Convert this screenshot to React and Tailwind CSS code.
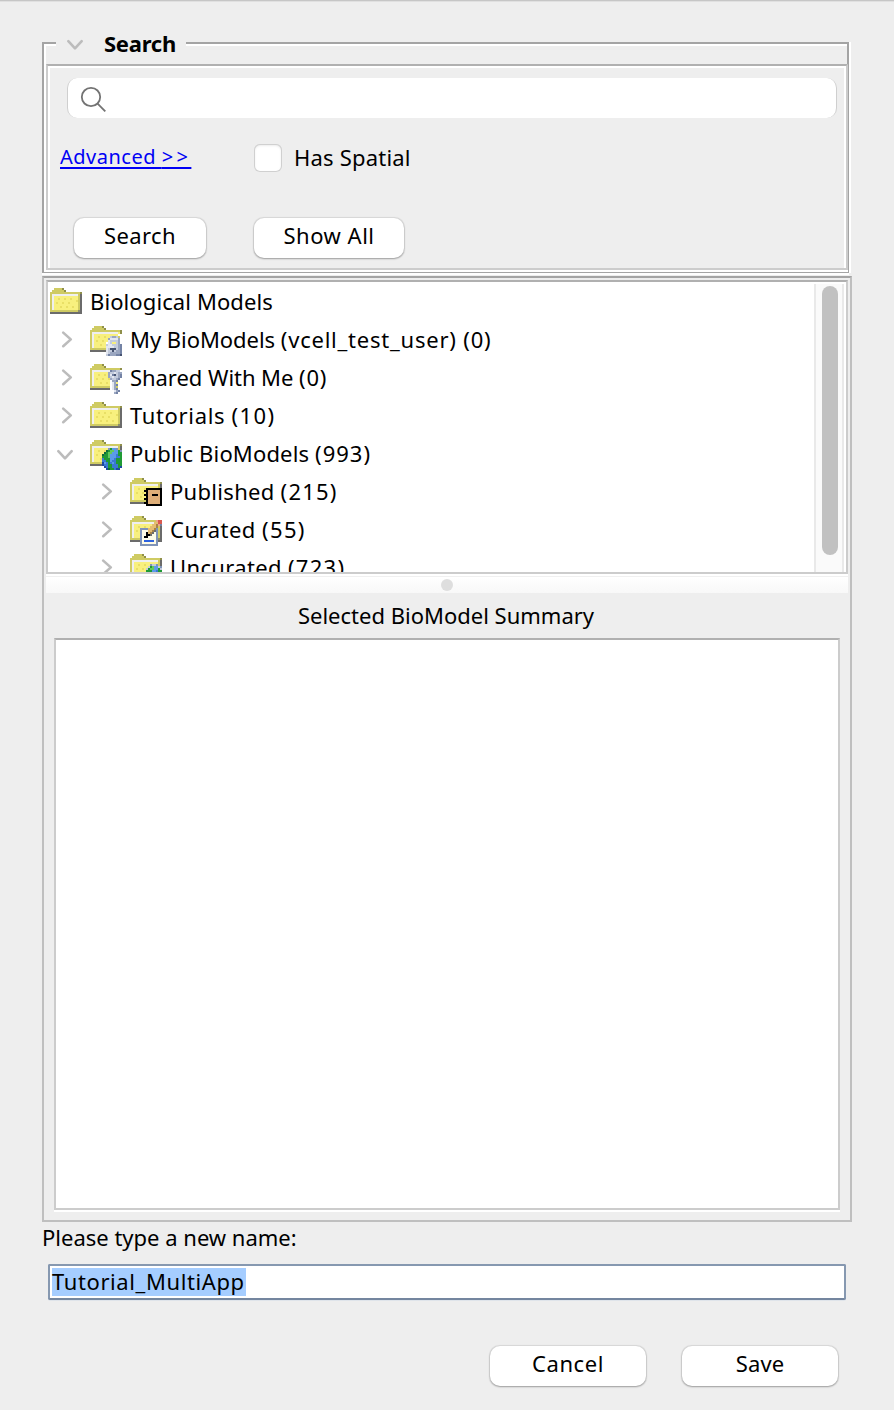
import React from "react";

const PALETTE = {
  o: "#cfcb63", d: "#8f8f4a", y: "#f8f07e", s: "#e9df66", h: "#efefef", g: "#6b6b6b", c: "#8d8d6e",
  a: "#c3cbdc", b: "#9aa6c0", e: "#7483a5", f: "#e3e7f0", n: "#465371", k: "#000000",
  t: "#deae78", w: "#ffffff", u: "#5b9be8", v: "#3a78d4", x: "#1d4aa0", G: "#1f9a35", H: "#62c95c", D: "#0d6b3c",
  B: "#2c62e0", p: "#7f93b8", r: "#d9594f", q: "#f0a090", m: "#e5bd72", l: "#a88346", i: "#fdfbe6",
};

const FOLDER = [
  "................",
  "..ooood.........",
  ".ooooood........",
  "oooooooooooooood",
  "ohhhhhhhhhhhhhog",
  "ohyyyyyyyyyyyyog",
  "ohyysyysyysyyyog",
  "ohyyyyyyyyyyysog",
  "ohysyysyysyyyyog",
  "ohyyyyyyyyyyyyog",
  "ohyyysyysyysyyog",
  "ohyyyyyyyyyyyyog",
  "oooooooooooooocg",
  "gggggggggggggggg",
  "................",
  "................",
];

const LOCK = [
  "", "", "", "",
  "              yd",
  "              ww",
  "          abba w",
  "         bffffbw",
  "         faaaabw",
  "        wfayyabw",
  "        affaaabe",
  "        ffffaabe",
  "        fannnabe",
  "        faanabbe",
  "        fabbbbbe",
  "        aebbbeen",
];

const KEY = [
  "", "", "",
  "              od",
  "          ebbaaw",
  "         baafabb",
  "         bfenabe",
  "         bafaabe",
  "          baabew",
  "          wbbeww",
  "          wfb www",
  "          wfbeww",
  "          wfb www",
  "          wfbeww",
  "            fbe",
  "            be",
];

const GLOBE = [
  "", "", "", "", "",
  "         pGuup",
  "        DGHHuuGp",
  "       DGHHuuuGG",
  "      DGGHuuuvGGD",
  "      GGGHuuuvvGG",
  "      vGGGuuvGGGG",
  "      vvGGuvvGGGD",
  "      xuvGvuvGGGD",
  "      xvvGGvvvGGx",
  "       xvGGvvvGx",
  "        xDGGvxx",
];

const NOTEBOOK = [
  "", "", "", "", "", "",
  "        kkkkkkkk",
  "       kkttttttk",
  "        kttttttk",
  "       kkttkkktk",
  "        kttttttk",
  "       kkttttttk",
  "        kttttttk",
  "       kkttttttk",
  "        kkkkkkkk",
  "",
];

const NOTE = [
  "", "", "",
  "             qrr",
  "            mmrr",
  "           mmlqe",
  "          mmmlog",
  "     ppppmmmlpog",
  "     piiimmlgpog",
  "     piikmlgipog",
  "     piikkgiipog",
  "     pikkiiiipog",
  "     piiiiiiipcg",
  "     piBBBBBipgg",
  "     piiiiiiip",
  "     ppppppppp",
];

const SMALL_GLOBE = [
  "", "", "", "", "", "",
  "          paap",
  "         aGHuuap",
  "        aGHHuuGa",
  "        GGGuuvGG",
  "        GGuuvvGG",
  "        vGGuvGGD",
  "        xvGGvvGx",
  "         xvGvvx",
  "          xxxx", "",
];

function FolderIcon({ overlay }) {
  const cells = [];
  for (let y = 0; y < 16; y++) {
    for (let x = 0; x < 16; x++) {
      const top = overlay && overlay[y] && overlay[y][x];
      const ch = top && top !== " " ? top : FOLDER[y][x];
      if (PALETTE[ch]) cells.push(<rect key={x + "-" + y} x={x} y={y} width="1" height="1" fill={PALETTE[ch]} />);
    }
  }
  return (
    <svg className="h-8 w-8 shrink-0" viewBox="0 0 16 16" shapeRendering="crispEdges">
      {cells}
    </svg>
  );
}

function Chevron({ open }) {
  return (
    <svg className="h-5 w-5 shrink-0 overflow-visible" viewBox="0 0 20 20" fill="none" stroke="#bcbcbc" strokeWidth="2.6" strokeLinecap="round" strokeLinejoin="round">
      <path d={open ? "M0.3 7.2 L7 14.4 L13.7 7.2" : "M5.2 2.6 L12.8 9.4 L5.2 16.2"} />
    </svg>
  );
}

const ROWS = [
  { label: "Biological Models", pad: "pl-0.5", track: "tracking-[0.1px]", root: true },
  { label: "My BioModels ", detail: "(vcell_test_user) (0)", pad: "pl-2.5", track: "tracking-[-0.04px]", detailTrack: "tracking-[0.78px]", overlay: LOCK },
  { label: "Shared With Me ", detail: "(0)", pad: "pl-2.5", track: "tracking-[-0.05px]", detailTrack: "tracking-[0.8px]", overlay: KEY },
  { label: "Tutorials ", detail: "(10)", pad: "pl-2.5", track: "tracking-[0.65px]", detailTrack: "tracking-[1.4px]" },
  { label: "Public BioModels ", detail: "(993)", pad: "pl-2.5", track: "tracking-[0.15px]", detailTrack: "tracking-[1px]", overlay: GLOBE, open: true },
  { label: "Published ", detail: "(215)", pad: "pl-[50px]", track: "tracking-[0.3px]", detailTrack: "tracking-[1.2px]", overlay: NOTEBOOK },
  { label: "Curated ", detail: "(55)", pad: "pl-[50px]", track: "tracking-[0.5px]", detailTrack: "tracking-[1.3px]", overlay: NOTE },
  { label: "Uncurated ", detail: "(723)", pad: "pl-[50px]", track: "tracking-[0.35px]", detailTrack: "tracking-[1.3px]", overlay: SMALL_GLOBE },
];

function TreeRow({ row }) {
  return (
    <div className={"flex h-[38px] shrink-0 items-center " + row.pad}>
      {!row.root && <div className="w-8"><Chevron open={row.open} /></div>}
      <FolderIcon overlay={row.overlay} />
      <span className={"ml-2 pb-0.5 whitespace-pre " + row.track}>
        {row.label}
        {row.detail && <span className={row.detailTrack}>{row.detail}</span>}
      </span>
    </div>
  );
}

function Button({ children, className }) {
  return (
    <button className={"flex h-10 items-center justify-center rounded-[10px] bg-white pb-1.5 shadow-[0_0_1px_0.5px_rgba(0,0,0,0.09),0_1px_2px_rgba(0,0,0,0.28)] " + className}>
      {children}
    </button>
  );
}

export default function App() {
  return (
    <div className="flex h-[1410px] w-[894px] flex-col border-t border-[#c6c6c6] bg-[#eeeeee] pr-[42px] pl-[42px] font-['Noto_Sans',sans-serif] text-[22px] leading-[30px] text-black shadow-[inset_0_1px_0_#e0e0e0]">
      {/* Collapsible search group */}
      <section className="mt-[29px] flex h-[245px] w-[809px] flex-col">
        <div className="flex h-[34px] shrink-0 items-start">
          <div className="mt-3 h-[22px] w-3.5 border-t-2 border-l-2 border-[#a4a4a4] shadow-[inset_2px_2px_0_#fff]" />
          <div className="flex h-[34px] w-[130px] items-start pl-3">
            <div className="mt-1"><Chevron open /></div>
            <span className="ml-4 text-[22px] leading-[26px] font-bold tracking-[-0.25px]">Search</span>
          </div>
          <div className="mt-3 h-[22px] w-[663px] border-t-2 border-r-2 border-[#a4a4a4] shadow-[inset_0_2px_0_#fff,2px_0_0_#fff]" />
        </div>
        <div className="flex h-[209px] w-[807px] border-b border-l-2 border-r border-[#a4a4a4] pl-0.5 shadow-[inset_2px_0_0_#fff,inset_0_-2px_0_#fff,2px_0_0_#fff,0_2px_0_#fff]">
          <div className="h-[206px] w-[802px] border-2 border-[#cccccc] border-t-[#b0b0b0] shadow-[inset_2px_2px_0_#fff,inset_-2px_0_0_#fff]">
            <div className="mt-3 ml-[19px] flex h-10 w-[770px] items-center rounded-[10px] border-x border-[#cfcfcf] bg-white pl-3">
              <svg className="h-7 w-7" viewBox="0 0 28 28" fill="none" stroke="#737373" strokeWidth="1.8">
                <circle cx="11" cy="13" r="9.2" />
                <path d="M17.6 19.7 L25.3 27.4" />
              </svg>
            </div>
            <div className="mt-[26px] flex h-7 items-center pl-3">
              <div className="w-[194px] pb-0.5 text-[20px]">
                <a className="tracking-[0.5px] text-[#0000f5] underline decoration-2 underline-offset-[3px]">Advanced <span className="tracking-[3.4px]">&gt;&gt;</span></a>
              </div>
              <span className="h-7 w-7 rounded-[6px] bg-white shadow-[inset_0_0_0_1px_#d0d0d0,inset_0_1px_3px_rgba(0,0,0,0.15)]" />
              <span className="ml-3 pb-0.5 tracking-[0.2px]">Has Spatial</span>
            </div>
            <div className="mt-[46px] flex pl-[26px]">
              <Button className="w-[132px] tracking-[0.4px]">Search</Button>
              <Button className="ml-12 w-[150px] tracking-[0.5px]">Show All</Button>
            </div>
          </div>
        </div>
      </section>

      {/* Model tree and summary */}
      <section className="mt-px h-[946px] w-[810px] border-2 border-[#bfbfbf] border-t-[#a4a4a4] px-0.5 pt-0.5">
        <div className="flex h-[294px] w-[802px] border-2 border-[#cccccc] border-t-[#b0b0b0] bg-white">
          <div className="flex w-[766px] flex-col overflow-hidden pt-px">
            {ROWS.map((row) => <TreeRow key={row.label} row={row} />)}
          </div>
          <div className="mt-0.5 flex w-[30px] justify-center border-x-2 border-[#e9e9e9] bg-[#fafafa] pt-0.5">
            <div className="ml-0.5 h-[269px] w-4 rounded-full bg-[#c1c1c1]" />
          </div>
        </div>
        <div className="mt-0.5 flex h-[17px] w-[802px] items-center justify-center border-t border-[#f0f0f0] bg-linear-to-b from-white to-[#f8f8f8] shadow-[0_-2px_0_#fff]">
          <span className="h-3 w-3 rounded-full bg-[#dedede]" />
        </div>
        <h2 className="mt-[7px] h-[38px] pr-0.5 text-center font-normal">Selected BioModel Summary</h2>
        <div className="ml-2 h-[572px] w-[786px] border-2 border-[#cccccc] border-t-[#b0b0b0] bg-white shadow-[0_2px_0_#fff]" />
      </section>

      {/* Name entry */}
      <label className="h-8">Please type a new name:</label>
      <div className="mt-2.5 ml-1.5 flex h-9 w-[798px] items-center rounded-[2px] border-2 border-[#8698b0] border-b-[#74869f] bg-white pl-0.5 shadow-[0_1px_0_#dfe4ea]">
        <span className="flex h-7 w-[194px] items-center bg-[#a5cdff] pb-0.5 tracking-[0.6px] whitespace-nowrap">Tutorial_MultiApp</span>
      </div>
      <div className="mt-[46px] flex pl-[448px]">
        <Button className="w-[156px] tracking-[0.6px]">Cancel</Button>
        <Button className="ml-9 w-[156px] tracking-[0.1px]">Save</Button>
      </div>
    </div>
  );
}
